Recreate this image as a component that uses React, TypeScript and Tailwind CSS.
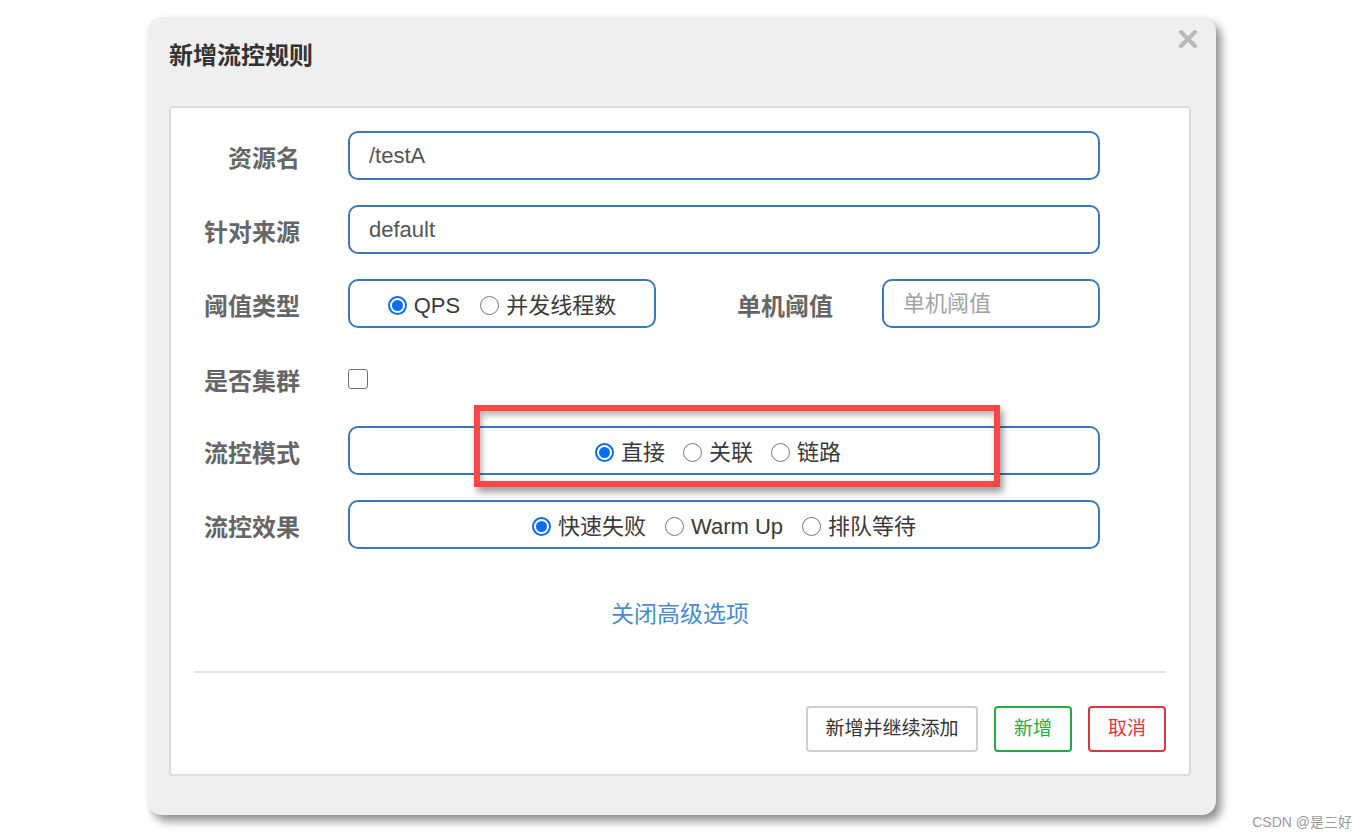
import React from "react";

const FONT = { fontFamily: '"Liberation Sans", "Noto Sans CJK SC", sans-serif' };

function Radio({ checked, label }: { checked?: boolean; label: string }) {
  return (
    <span className="flex items-center">
      {checked ? (
        <span className="flex h-[19px] w-[19px] items-center justify-center rounded-full border-2 border-[#0b6cf0] bg-white">
          <span className="h-[11px] w-[11px] rounded-full bg-[#0b6cf0]" />
        </span>
      ) : (
        <span className="h-[19px] w-[19px] rounded-full border-[1.5px] border-[#777] bg-white" />
      )}
      <span className="ml-[7px] text-[22px] leading-none text-[#3a3a3a]">{label}</span>
    </span>
  );
}

function Label({ children, w = "w-[129px]" }: { children: React.ReactNode; w?: string }) {
  return (
    <div className={`${w} shrink-0 pt-[7px] text-right text-[24px] font-bold leading-none text-[#666]`}>
      {children}
    </div>
  );
}

const boxCls =
  "h-[49px] rounded-[10px] border-2 border-[#3a78b5] bg-white";

export default function App() {
  return (
    <div className="relative h-[840px] w-full overflow-hidden bg-white" style={FONT}>
      <div className="pl-[148px] pt-[17px]">
        <div className="relative w-[1068px] rounded-[14px] bg-[#efefef] px-[21px] pb-[39px] pt-[27px] shadow-[5px_6px_10px_rgba(0,0,0,0.45)]">
          <div className="h-[23px] text-[24px] font-bold leading-none text-[#333]">新增流控规则</div>
          <svg className="absolute right-[19px] top-[13px]" width="18" height="18" viewBox="0 0 18 18">
            <path d="M2 2 L16 16 M16 2 L2 16" stroke="#b9b9b9" strokeWidth="4" strokeLinecap="round" />
          </svg>

          <div className="relative mt-[39px] w-[1022px] rounded-[4px] border-2 border-[#dcdcdc] bg-white pb-[22px] pt-[23px]">
            {/* row 1 */}
            <div className="flex h-[49px] items-center">
              <Label>资源名</Label>
              <div className={`ml-[48px] flex w-[752px] items-center px-[19px] ${boxCls}`}>
                <span className="text-[22px] leading-none text-[#555]">/testA</span>
              </div>
            </div>
            {/* row 2 */}
            <div className="mt-[25px] flex h-[49px] items-center">
              <Label>针对来源</Label>
              <div className={`ml-[48px] flex w-[752px] items-center px-[19px] ${boxCls}`}>
                <span className="text-[22px] leading-none text-[#555]">default</span>
              </div>
            </div>
            {/* row 3 */}
            <div className="mt-[25px] flex h-[49px] items-center">
              <Label>阈值类型</Label>
              <div className="ml-[48px] flex w-[752px] items-center">
                <div className={`flex w-[308px] items-center justify-center gap-[20px] pt-[4px] ${boxCls}`}>
                  <Radio checked label="QPS" />
                  <Radio label="并发线程数" />
                </div>
                <Label w="w-[177px]">单机阈值</Label>
                <div className={`ml-[49px] flex w-[218px] items-center px-[19px] ${boxCls}`}>
                  <span className="text-[22px] leading-none text-[#a3a3a3]">单机阈值</span>
                </div>
              </div>
            </div>
            {/* row 4 */}
            <div className="mt-[28px] flex h-[44px] items-center">
              <Label>是否集群</Label>
              <div className="ml-[48px] flex items-center">
                <span className="mt-[1px] h-[20px] w-[20px] rounded-[3px] border-[1.5px] border-[#707070] bg-white" />
              </div>
            </div>
            {/* row 5 */}
            <div className="mt-[26px] flex h-[49px] items-center">
              <Label>流控模式</Label>
              <div className={`ml-[48px] flex w-[752px] items-center justify-center gap-[18px] pr-[12px] pt-[4px] ${boxCls}`}>
                <Radio checked label="直接" />
                <Radio label="关联" />
                <Radio label="链路" />
              </div>
            </div>
            {/* row 6 */}
            <div className="mt-[25px] flex h-[49px] items-center">
              <Label>流控效果</Label>
              <div className={`ml-[48px] flex w-[752px] items-center justify-center gap-[19px] pt-[4px] ${boxCls}`}>
                <Radio checked label="快速失败" />
                <Radio label="Warm Up" />
                <Radio label="排队等待" />
              </div>
            </div>

            <div className="mt-[53px] flex h-[24px] items-center justify-center">
              <span className="text-[23px] leading-none text-[#4a8bd0]">关闭高级选项</span>
            </div>

            <div className="mx-[23px] mt-[45px] h-[2px] bg-[#e5e5e5]" />

            <div className="mr-[23px] mt-[33px] flex justify-end gap-[16px]">
              <button className="h-[46px] w-[172px] rounded-[4px] border-2 border-[#cfcfcf] bg-white text-[19px] text-[#333]">
                新增并继续添加
              </button>
              <button className="h-[46px] w-[78px] rounded-[4px] border-2 border-[#28a745] bg-white text-[19px] text-[#28a745]">
                新增
              </button>
              <button className="h-[46px] w-[78px] rounded-[4px] border-2 border-[#dc3545] bg-white text-[19px] text-[#dc3545]">
                取消
              </button>
            </div>

            {/* annotation */}
            <div className="pointer-events-none absolute left-[303px] top-[297px] h-[82px] w-[526px] border-[6px] border-[#ff4545] shadow-[3px_5px_7px_rgba(0,0,0,0.4),inset_2px_4px_6px_rgba(0,0,0,0.3)]" />
          </div>
        </div>
      </div>
      <div className="absolute bottom-[11px] right-[16px] text-[14px] leading-none text-[#9a9a9a]">CSDN @是三好</div>
    </div>
  );
}
